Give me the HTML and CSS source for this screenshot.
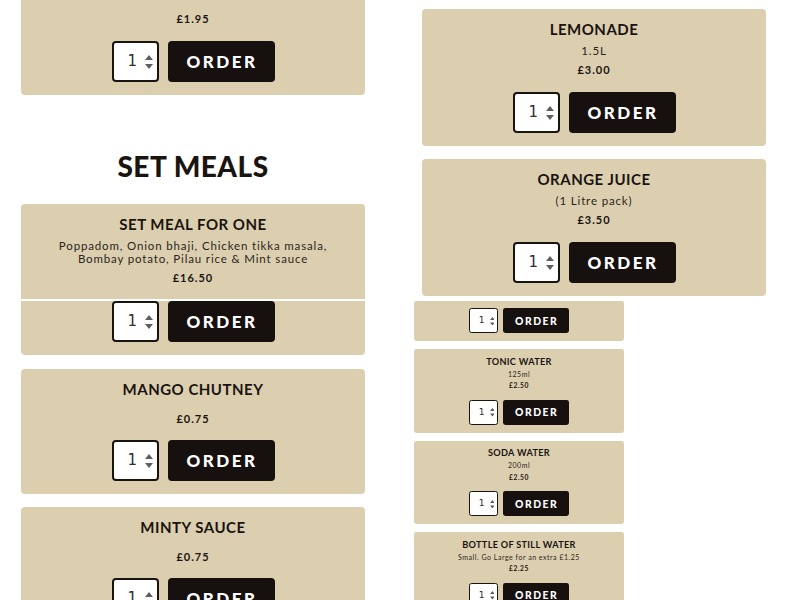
FILE: index.html
```html
<!DOCTYPE html>
<html lang="en">
<head>
<meta charset="utf-8">
<title>Menu</title>
<link rel="stylesheet" href="styles.css">
</head>
<body>
<div class="page">
  <div class="col col-left">
    <div class="card card-cont">
      <p class="price">£1.95</p>
      <div class="order-row">
        <div class="qty"><span class="qty-val">1</span><svg class="spin" viewBox="0 0 8 14"><path d="M4 0L8 5H0Z M0 9H8L4 14Z"/></svg></div>
        <button class="order-btn">ORDER</button>
      </div>
    </div>

    <h2 class="section-title">SET MEALS</h2>

    <div class="card card-seam">
      <h3 class="title">SET MEAL FOR ONE</h3>
      <p class="desc">Poppadom, Onion bhaji, Chicken tikka masala,<br>Bombay potato, Pilau rice &amp; Mint sauce</p>
      <p class="price">£16.50</p>
      <div class="order-row">
        <div class="qty"><span class="qty-val">1</span><svg class="spin" viewBox="0 0 8 14"><path d="M4 0L8 5H0Z M0 9H8L4 14Z"/></svg></div>
        <button class="order-btn">ORDER</button>
      </div>
    </div>

    <div class="card">
      <h3 class="title">MANGO CHUTNEY</h3>
      <p class="desc desc-empty"></p>
      <p class="price">£0.75</p>
      <div class="order-row">
        <div class="qty"><span class="qty-val">1</span><svg class="spin" viewBox="0 0 8 14"><path d="M4 0L8 5H0Z M0 9H8L4 14Z"/></svg></div>
        <button class="order-btn">ORDER</button>
      </div>
    </div>

    <div class="card card-last">
      <h3 class="title">MINTY SAUCE</h3>
      <p class="desc desc-empty"></p>
      <p class="price">£0.75</p>
      <div class="order-row">
        <div class="qty"><span class="qty-val">1</span><svg class="spin" viewBox="0 0 8 14"><path d="M4 0L8 5H0Z M0 9H8L4 14Z"/></svg></div>
        <button class="order-btn">ORDER</button>
      </div>
    </div>
  </div>

  <div class="col col-right">
    <div class="card">
      <h3 class="title">LEMONADE</h3>
      <p class="desc">1.5L</p>
      <p class="price">£3.00</p>
      <div class="order-row">
        <div class="qty"><span class="qty-val">1</span><svg class="spin" viewBox="0 0 8 14"><path d="M4 0L8 5H0Z M0 9H8L4 14Z"/></svg></div>
        <button class="order-btn">ORDER</button>
      </div>
    </div>

    <div class="card">
      <h3 class="title">ORANGE JUICE</h3>
      <p class="desc">(1 Litre pack)</p>
      <p class="price">£3.50</p>
      <div class="order-row">
        <div class="qty"><span class="qty-val">1</span><svg class="spin" viewBox="0 0 8 14"><path d="M4 0L8 5H0Z M0 9H8L4 14Z"/></svg></div>
        <button class="order-btn">ORDER</button>
      </div>
    </div>

    <div class="mini">
      <div class="card card-row-only">
        <div class="order-row">
          <div class="qty"><span class="qty-val">1</span><svg class="spin" viewBox="0 0 8 14"><path d="M4 0L8 5H0Z M0 9H8L4 14Z"/></svg></div>
          <button class="order-btn">ORDER</button>
        </div>
      </div>

      <div class="card">
        <h3 class="title">TONIC WATER</h3>
        <p class="desc">125ml</p>
        <p class="price">£2.50</p>
        <div class="order-row">
          <div class="qty"><span class="qty-val">1</span><svg class="spin" viewBox="0 0 8 14"><path d="M4 0L8 5H0Z M0 9H8L4 14Z"/></svg></div>
          <button class="order-btn">ORDER</button>
        </div>
      </div>

      <div class="card">
        <h3 class="title">SODA WATER</h3>
        <p class="desc">200ml</p>
        <p class="price">£2.50</p>
        <div class="order-row">
          <div class="qty"><span class="qty-val">1</span><svg class="spin" viewBox="0 0 8 14"><path d="M4 0L8 5H0Z M0 9H8L4 14Z"/></svg></div>
          <button class="order-btn">ORDER</button>
        </div>
      </div>

      <div class="card">
        <h3 class="title">BOTTLE OF STILL WATER</h3>
        <p class="desc">Small. Go Large for an extra £1.25</p>
        <p class="price">£2.25</p>
        <div class="order-row">
          <div class="qty"><span class="qty-val">1</span><svg class="spin" viewBox="0 0 8 14"><path d="M4 0L8 5H0Z M0 9H8L4 14Z"/></svg></div>
          <button class="order-btn">ORDER</button>
        </div>
      </div>
    </div>
  </div>
</div>
</body>
</html>
```

FILE: styles.css
```css
* { box-sizing: border-box; }

html, body {
  margin: 0;
  padding: 0;
  background: #ffffff;
  height: 600px;
  overflow: hidden;
}

body {
  font-family: "Lato", "Noto Sans", sans-serif;
  color: #1a1410;
}

.page {
  display: flex;
  align-items: flex-start;
  padding-left: 21px;
}

.col {
  width: 344px;
  display: flex;
  flex-direction: column;
  gap: 14px;
}

.col-right {
  margin-left: 57px;
  padding-top: 9px;
  gap: 13px;
}

.card {
  position: relative;
  background: #dccfb0;
  border-radius: 4px;
  padding: 11px 10px 13px;
  text-align: center;
}

.card-cont {
  padding-top: 12px;
  border-radius: 0 0 4px 4px;
}

.title {
  margin: 0;
  font-size: 15px;
  line-height: 18px;
  font-weight: 700;
  letter-spacing: 0.5px;
}

.desc {
  margin: 6px 0 0;
  font-size: 11.5px;
  line-height: 13px;
  letter-spacing: 0.85px;
  color: #2b2520;
}

.desc-empty {
  height: 2px;
}

.price {
  margin: 6px 0 0;
  font-size: 11px;
  line-height: 13px;
  font-weight: 700;
  letter-spacing: 1px;
}

.card-cont .price {
  margin-top: 0;
}

.order-row {
  display: flex;
  justify-content: center;
  gap: 9px;
  margin-top: 16px;
}

.desc-empty + .price + .order-row {
  margin-top: 15px;
}

.qty {
  width: 47px;
  height: 41px;
  background: #ffffff;
  border: 2px solid #1a1410;
  border-radius: 4px;
  display: flex;
  align-items: center;
  padding-left: 14px;
  gap: 8px;
}

.qty-val {
  font-family: "DejaVu Sans", sans-serif;
  font-size: 15px;
  font-weight: 400;
  color: #2e2e2e;
  line-height: 1;
}

.spin {
  width: 8px;
  height: 14px;
  fill: #5e5e5e;
}

.order-btn {
  width: 107px;
  height: 41px;
  border: none;
  border-radius: 4px;
  background: #16110f;
  color: #ffffff;
  font-family: "Lato", "Noto Sans", sans-serif;
  font-size: 17px;
  font-weight: 900;
  letter-spacing: 2.5px;
  padding: 0;
  padding-left: 2px;
}

.section-title {
  margin: 40px 0 6px;
  font-size: 28px;
  line-height: 35px;
  font-weight: 900;
  text-align: center;
  letter-spacing: 0.5px;
}

/* seam across the set meal card */
.card-seam {
  padding-bottom: 13px;
}

.card-seam .order-row {
  margin-top: 17px;
}

.card-seam::after {
  content: "";
  position: absolute;
  left: 0;
  right: 0;
  top: 95px;
  height: 2px;
  background: #ffffff;
}

.card-last {
  margin-top: -1px;
}

.mini {
  zoom: 0.61;
  width: 344px;
  margin: -13px 0 0 -13px;
  display: flex;
  flex-direction: column;
  gap: 13px;
}

.card-row-only {
  padding-top: 12px;
}

.card-row-only .order-row {
  margin-top: 0;
}
```
